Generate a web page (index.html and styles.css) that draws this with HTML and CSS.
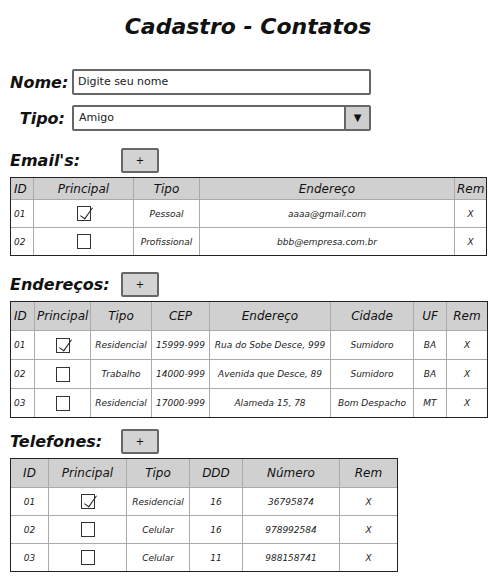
FILE: index.html
```html
<!DOCTYPE html>
<html lang="pt-BR">
<head>
    <meta charset="UTF-8">
    <meta name="viewport" content="width=device-width, initial-scale=1.0">
    <title>Cadastro - Contatos</title>
    <link rel="stylesheet" href="styles.css">
</head>
<body>
    <div class="page">
        <h1 class="title">Cadastro - Contatos</h1>

        <div class="form">
            <label class="label">Nome:</label>
            <div class="input">Digite seu nome</div>
            <label class="label">Tipo:</label>
            <div class="select">
                <span class="select-text">Amigo</span>
                <span class="select-btn">&#9660;</span>
            </div>
        </div>

        <!-- Emails -->
        <div class="section section-emails">
            <div class="section-head">
                <h2 class="section-title">Email's:</h2>
                <button class="add-btn">+</button>
            </div>
            <table class="grid emails">
                <colgroup>
                    <col class="w22"><col class="w100"><col class="w66"><col class="w255"><col class="w32">
                </colgroup>
                <thead>
                    <tr><th class="id">ID</th><th>Principal</th><th>Tipo</th><th>Endereço</th><th>Rem</th></tr>
                </thead>
                <tbody>
                    <tr><td class="id">01</td><td><span class="check on"></span></td><td>Pessoal</td><td>aaaa@gmail.com</td><td>X</td></tr>
                    <tr><td class="id">02</td><td><span class="check"></span></td><td>Profissional</td><td>bbb@empresa.com.br</td><td>X</td></tr>
                </tbody>
            </table>
        </div>

        <!-- Enderecos -->
        <div class="section section-addr">
            <div class="section-head">
                <h2 class="section-title">Endereços:</h2>
                <button class="add-btn">+</button>
            </div>
            <table class="grid addr">
                <colgroup>
                    <col class="w23"><col class="w56"><col class="w61"><col class="w58"><col class="w121"><col class="w83"><col class="w33"><col class="w41">
                </colgroup>
                <thead>
                    <tr><th class="id">ID</th><th>Principal</th><th>Tipo</th><th>CEP</th><th>Endereço</th><th>Cidade</th><th>UF</th><th>Rem</th></tr>
                </thead>
                <tbody>
                    <tr><td class="id">01</td><td><span class="check on"></span></td><td>Residencial</td><td>15999-999</td><td>Rua do Sobe Desce, 999</td><td>Sumidoro</td><td>BA</td><td>X</td></tr>
                    <tr><td class="id">02</td><td><span class="check"></span></td><td>Trabalho</td><td>14000-999</td><td>Avenida que Desce, 89</td><td>Sumidoro</td><td>BA</td><td>X</td></tr>
                    <tr><td class="id">03</td><td><span class="check"></span></td><td>Residencial</td><td>17000-999</td><td>Alameda 15, 78</td><td>Bom Despacho</td><td>MT</td><td>X</td></tr>
                </tbody>
            </table>
        </div>

        <!-- Telefones -->
        <div class="section section-tel">
            <div class="section-head">
                <h2 class="section-title">Telefones:</h2>
                <button class="add-btn">+</button>
            </div>
            <table class="grid tel">
                <colgroup>
                    <col class="w37"><col class="w78"><col class="w63"><col class="w53"><col class="w97"><col class="w58">
                </colgroup>
                <thead>
                    <tr><th>ID</th><th>Principal</th><th>Tipo</th><th>DDD</th><th>Número</th><th>Rem</th></tr>
                </thead>
                <tbody>
                    <tr><td>01</td><td><span class="check on"></span></td><td>Residencial</td><td>16</td><td>36795874</td><td>X</td></tr>
                    <tr><td>02</td><td><span class="check"></span></td><td>Celular</td><td>16</td><td>978992584</td><td>X</td></tr>
                    <tr><td>03</td><td><span class="check"></span></td><td>Celular</td><td>11</td><td>988158741</td><td>X</td></tr>
                </tbody>
            </table>
        </div>
    </div>
</body>
</html>
```

FILE: styles.css
```css
* {
    box-sizing: border-box;
}

body {
    margin: 0;
    background: #fff;
    color: #111;
    font-family: "DejaVu Sans", "Liberation Sans", sans-serif;
}

.page {
    width: 496px;
    padding: 12px 10px 0 10px;
}

.title {
    margin: 0;
    height: 30px;
    line-height: 30px;
    text-align: center;
    font-size: 22px;
    font-style: italic;
    font-weight: bold;
}

/* Nome / Tipo */
.form {
    display: grid;
    grid-template-columns: 55px 299px;
    column-gap: 7px;
    row-gap: 10px;
    align-items: center;
    margin-top: 27px;
}

.label {
    text-align: right;
    font-size: 16px;
    font-style: italic;
    font-weight: bold;
}

.input,
.select {
    height: 26px;
    border: 2px solid #666;
    border-radius: 2px;
    font-size: 11px;
    line-height: 22px;
    color: #222;
}

.input {
    padding-left: 4px;
}

.select {
    display: flex;
}

.select-text {
    flex: 1;
    padding-left: 5px;
}

.select-btn {
    width: 25px;
    background: #cfcfcf;
    border-left: 2px solid #666;
    text-align: center;
    font-size: 10px;
    color: #111;
}

/* Sections */
.section-emails { margin-top: 17px; }
.section-addr { margin-top: 16px; }
.section-tel { margin-top: 11px; }

.section-head {
    display: flex;
    align-items: center;
    height: 25px;
    margin-bottom: 4px;
}

.section-title {
    width: 111px;
    margin: 0;
    font-size: 16px;
    font-style: italic;
    font-weight: bold;
}

.add-btn {
    width: 38px;
    height: 25px;
    padding: 0;
    background: #d3d3d3;
    border: 2px solid #666;
    border-radius: 2px;
    font-family: inherit;
    font-size: 10px;
    color: #111;
}

/* Tables */
.grid {
    table-layout: fixed;
    border-collapse: separate;
    border-spacing: 0;
    border: 1px solid #222;
    font-style: italic;
}

.grid th,
.grid td {
    padding: 0 2px;
    text-align: center;
    white-space: nowrap;
    overflow: hidden;
    border-left: 1px solid #aaa;
    border-top: 1px solid #aaa;
}

.grid th:first-child,
.grid td:first-child {
    border-left: none;
}

.grid thead th {
    border-top: none;
    background: #d0d0d0;
    font-weight: normal;
    font-size: 12px;
    color: #111;
}

.grid td {
    font-size: 9px;
    color: #222;
}

.grid .id {
    text-align: left;
    padding-left: 3px;
}

.emails { width: 476px; }
.emails thead th { height: 21px; }
.emails td { height: 28px; }

.addr { width: 477px; }
.addr thead th { height: 28px; }
.addr td { height: 29px; }

.tel { width: 386px; }
.tel thead th { height: 28px; }
.tel td { height: 28px; }

/* column widths */
.w22 { width: 22px; }
.w23 { width: 23px; }
.w32 { width: 32px; }
.w33 { width: 33px; }
.w37 { width: 37px; }
.w41 { width: 41px; }
.w53 { width: 53px; }
.w56 { width: 56px; }
.w58 { width: 58px; }
.w61 { width: 61px; }
.w63 { width: 63px; }
.w66 { width: 66px; }
.w78 { width: 78px; }
.w83 { width: 83px; }
.w97 { width: 97px; }
.w100 { width: 100px; }
.w121 { width: 121px; }
.w255 { width: 255px; }

/* checkbox */
.check {
    position: relative;
    display: inline-block;
    width: 14px;
    height: 15px;
    border: 1.5px solid #333;
    vertical-align: middle;
}

.check.on::after {
    content: "";
    position: absolute;
    left: 2px;
    top: -5px;
    width: 5px;
    height: 13px;
    border-right: 1.5px solid #222;
    border-bottom: 1.5px solid #222;
    transform: rotate(35deg);
    transform-origin: bottom left;
}
```
